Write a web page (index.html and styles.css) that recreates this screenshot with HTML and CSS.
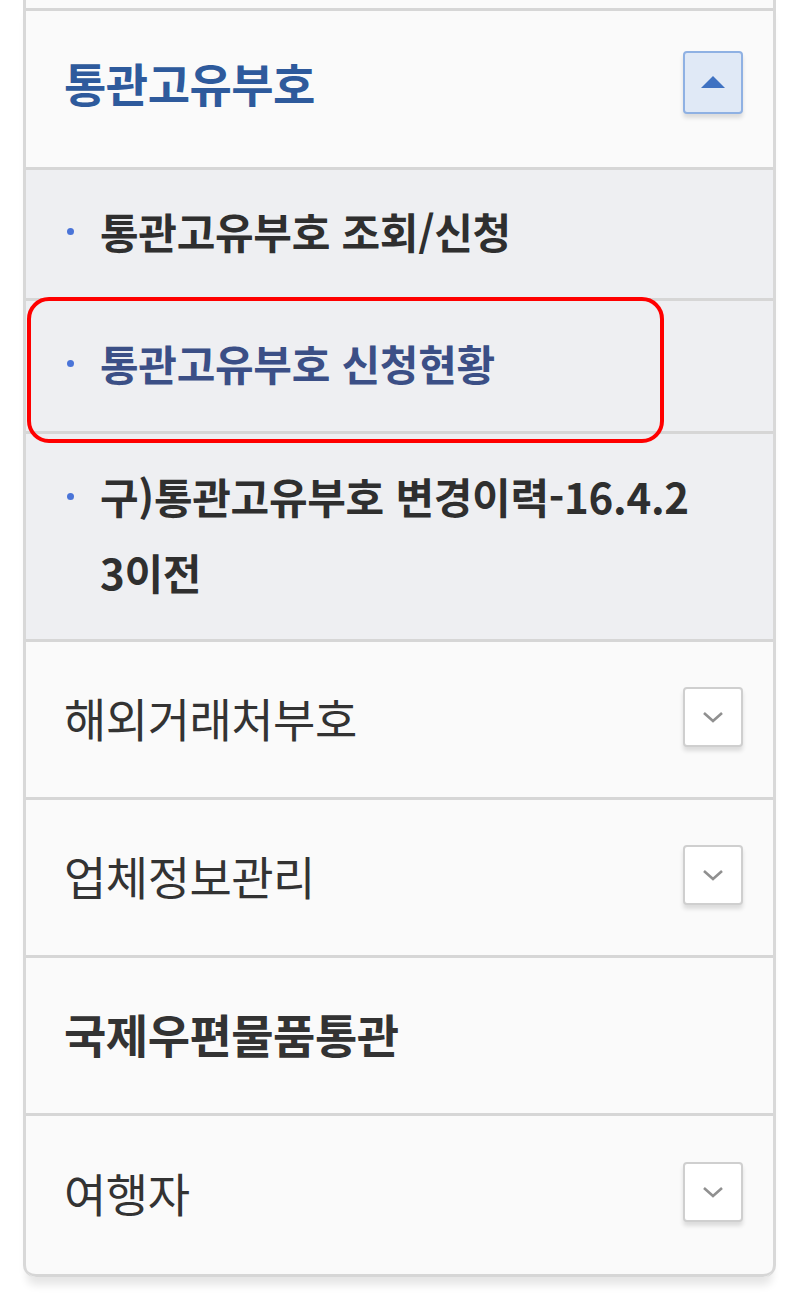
FILE: index.html
```html
<!DOCTYPE html>
<html lang="ko">
<head>
<meta charset="utf-8">
<link rel="stylesheet" href="styles.css">
</head>
<body>
<div class="panel">
  <div class="stub"></div>
  <div class="row row-open">
    <span class="title title-active">통관고유부호</span>
    <span class="toggle toggle-up">
      <svg width="26" height="14" viewBox="0 0 26 14"><polygon points="13,1 25,13 1,13" fill="#3f72c2"/></svg>
    </span>
  </div>
  <ul class="sub">
    <li class="sub-item"><span class="dot"></span><span class="sub-text">통관고유부호 조회/신청</span></li>
    <li class="sub-item sub-current"><span class="dot"></span><span class="sub-text">통관고유부호 신청현황</span></li>
    <li class="sub-item sub-long"><span class="dot"></span><span class="sub-text">구)통관고유부호 변경이력-16.4.23이전</span></li>
  </ul>
  <div class="row">
    <span class="title">해외거래처부호</span>
    <span class="toggle">
      <svg width="24" height="14" viewBox="0 0 24 14"><polyline points="3,3 12,11 21,3" fill="none" stroke="#909090" stroke-width="2.6"/></svg>
    </span>
  </div>
  <div class="row">
    <span class="title">업체정보관리</span>
    <span class="toggle">
      <svg width="24" height="14" viewBox="0 0 24 14"><polyline points="3,3 12,11 21,3" fill="none" stroke="#909090" stroke-width="2.6"/></svg>
    </span>
  </div>
  <div class="row">
    <span class="title title-bold">국제우편물품통관</span>
  </div>
  <div class="row row-last">
    <span class="title">여행자</span>
    <span class="toggle">
      <svg width="24" height="14" viewBox="0 0 24 14"><polyline points="3,3 12,11 21,3" fill="none" stroke="#909090" stroke-width="2.6"/></svg>
    </span>
  </div>
  <div class="highlight"></div>
</div>
</body>
</html>
```

FILE: styles.css
```css
html, body {
  margin: 0;
  padding: 0;
  background: #ffffff;
}
body {
  font-family: "Noto Sans CJK KR", "Noto Sans", sans-serif;
  width: 800px;
  height: 1297px;
  overflow: hidden;
}
.panel {
  position: relative;
  margin-left: 23px;
  width: 753px;
  box-sizing: border-box;
  background: #fafafa;
  border-left: 3px solid #d8d8d8;
  border-right: 3px solid #d8d8d8;
  border-radius: 0 0 12px 12px;
  box-shadow: 0 12px 8px -4px rgba(0,0,0,0.10);
}
.stub {
  height: 8px;
  border-bottom: 3px solid #d6d6d6;
}
.row {
  display: flex;
  align-items: center;
  justify-content: space-between;
  padding: 0 30px 6px 38px;
  box-sizing: border-box;
  border-bottom: 3px solid #d6d6d6;
  height: 158px;
}
.row-open { height: 159px; padding-bottom: 14px; }
.row-last { height: 161px; border-radius: 0 0 10px 10px; }
.title {
  font-size: 46px;
  color: #333;
  letter-spacing: -0.5px;
  line-height: 1;
}
.title-active {
  color: #2e5a9c;
  font-weight: 700;
}
.title-bold { font-weight: 700; }
.toggle {
  width: 60px;
  height: 60px;
  box-sizing: border-box;
  display: flex;
  align-items: center;
  justify-content: center;
  background: #fff;
  border: 2px solid #cfcfcf;
  border-radius: 4px;
  box-shadow: 0 4px 4px rgba(0,0,0,0.12);
}
.toggle-up {
  background: #e0e9f6;
  border-color: #8fb1e3;
  height: 63px;
}
.sub {
  list-style: none;
  margin: 0;
  padding: 0;
  background: #eeeff2;
}
.sub-item {
  display: flex;
  align-items: center;
  height: 131px;
  box-sizing: border-box;
  padding: 0 40px 6px 41px;
  border-bottom: 3px solid #d6d6d6;
}
.sub-current { height: 133px; }
.sub-long {
  height: 208px;
  align-items: flex-start;
  padding-top: 24px;
  padding-right: 78px;
}
.dot {
  flex: none;
  width: 7px;
  height: 7px;
  border-radius: 50%;
  background: #4a74d8;
  margin-right: 26px;
}
.sub-long .dot { margin-top: 35px; }
.sub-text {
  font-size: 42px;
  font-weight: 700;
  color: #2f2f2f;
  letter-spacing: -0.3px;
  line-height: 76px;
  word-break: break-all;
}
.sub-current .sub-text { color: #3b4f86; }
.highlight {
  position: absolute;
  left: 1px;
  top: 297px;
  width: 637px;
  height: 146px;
  box-sizing: border-box;
  border: 4px solid #ff0000;
  border-radius: 22px;
}
```
